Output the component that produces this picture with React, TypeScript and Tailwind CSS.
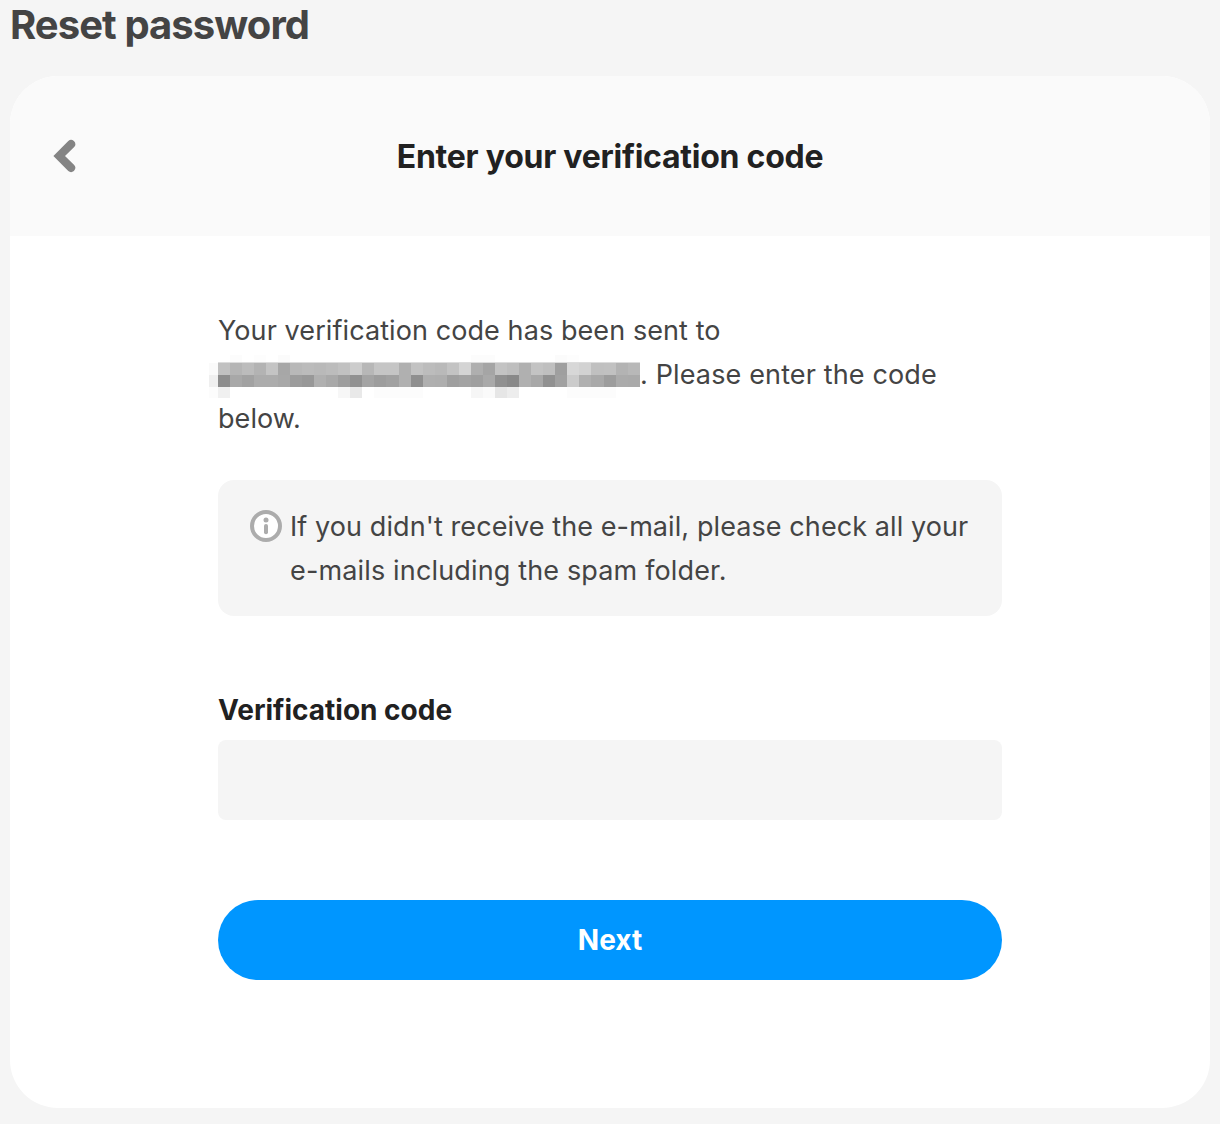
import React, { useState } from 'react'

/* ================= MASKED E-MAIL ================= */
const CELL = 12.06

// gray level per cell; 255 is blank
const maskRows = [
  {
    y: 2,
    h: 7,
    cells: [255, 255, 252, 255, 253, 255, 251, 255, 255, 255, 255, 255, 255, 255, 255, 255, 255, 255, 255, 255, 255, 255, 252, 252, 255, 255, 255, 255, 255, 251, 253, 255, 255, 255, 255, 255]
  },
  {
    y: 10,
    h: 12,
    cells: [250, 193, 181, 188, 179, 196, 167, 184, 187, 185, 188, 193, 204, 183, 197, 197, 176, 194, 188, 185, 195, 212, 175, 165, 195, 190, 176, 195, 191, 159, 215, 210, 192, 193, 179, 184]
  },
  {
    y: 22,
    h: 12,
    cells: [239, 141, 168, 162, 172, 172, 168, 156, 152, 176, 169, 158, 145, 164, 157, 161, 176, 143, 175, 174, 159, 163, 159, 169, 144, 137, 176, 168, 145, 161, 203, 176, 169, 157, 171, 170]
  },
  {
    y: 34,
    h: 11,
    cells: [252, 240, 255, 255, 255, 255, 255, 255, 255, 255, 255, 247, 233, 255, 252, 252, 252, 252, 255, 255, 255, 255, 246, 250, 230, 237, 255, 255, 255, 255, 252, 252, 252, 252, 255, 255]
  }
]

function MaskedEmail() {
  return (
    <svg className="-ml-[9px] inline-block overflow-visible align-top" width="431" height="44" shapeRendering="crispEdges">
      <rect x="8.6" y="9" width="422.1" height="1" fill="#dcdcdc" />
      {maskRows.map(row =>
        row.cells.map((c, i) =>
          c === 255 ? null : (
            <rect
              key={`${row.y}-${i}`}
              x={i === 0 ? 0 : 8.6 + (i - 1) * CELL}
              y={row.y}
              width={i === 0 ? 8.6 : CELL}
              height={row.h}
              fill={`rgb(${c},${c},${c})`}
            />
          )
        )
      )}
    </svg>
  )
}

export default function App() {
  const [code, setCode] = useState('')

  return (
    <div className="h-[1124px] overflow-hidden bg-[#f5f5f5] px-[10px] font-['Inter',sans-serif] text-[#444]">
      <h1 className="h-[76px] pt-px text-[40px] leading-[48px] font-bold tracking-[-0.93px]">Reset password</h1>

      <div className="h-[1032px] overflow-hidden rounded-[48px] bg-white">
        {/* HEADER */}
        <div className="grid h-40 grid-cols-[110px_1fr_110px] items-center bg-[#fafafa]">
          <button className="ml-[43px] w-6" aria-label="Back">
            <svg width="24" height="34" viewBox="0 0 24 34" fill="#848484">
              <path d="M0.4 17 L15.3 2 Q18 -0.3 20.9 2 Q23.8 5 21.2 8 L12 17 L21.2 26 Q23.8 29 20.9 32 Q18 34.3 15.3 32 Z" />
            </svg>
          </button>
          <h2 className="pt-0.5 text-center text-[32px] font-bold tracking-[-0.25px] whitespace-nowrap text-[#212121]">
            Enter your verification code
          </h2>
        </div>

        {/* FORM */}
        <div className="mx-auto w-[784px] pt-[73px] text-[27px] leading-[44px] tracking-[0.085px] whitespace-nowrap">
          <p>
            Your verification code has been sent to
            <br />
            <MaskedEmail />
            <span className="tracking-[0.14px]">. Please enter the code</span>
            <br />
            below.
          </p>

          <div className="mt-[39px] flex h-[136px] gap-2 rounded-2xl bg-[#f5f5f5] px-8 pt-[25px]">
            <svg className="mt-[5px] shrink-0" width="32" height="32" viewBox="0 0 32 32">
              <circle cx="16" cy="16" r="14" fill="#fff" stroke="#acacac" strokeWidth="4" />
              <circle cx="16" cy="10" r="2.5" fill="#acacac" />
              <path d="M16 16v6.2" stroke="#acacac" strokeWidth="4" strokeLinecap="round" />
            </svg>
            <p>
              If you didn't receive the e-mail, please check all your
              <br />
              <span className="tracking-[0.15px]">e-mails including the spam folder.</span>
            </p>
          </div>

          <label className="mt-[72px] block pt-px text-[28px] leading-[43px] font-bold tracking-normal text-[#212121]" htmlFor="code">
            Verification code
          </label>
          <input
            id="code"
            className="mt-2 block h-20 w-full rounded-lg bg-[#f5f5f5] px-6 outline-none"
            value={code}
            onChange={e => setCode(e.target.value)}
          />

          <button className="mt-20 block h-20 w-full rounded-full bg-[#0096ff] text-[28px] font-bold tracking-normal text-white">
            Next
          </button>
        </div>
      </div>
    </div>
  )
}
